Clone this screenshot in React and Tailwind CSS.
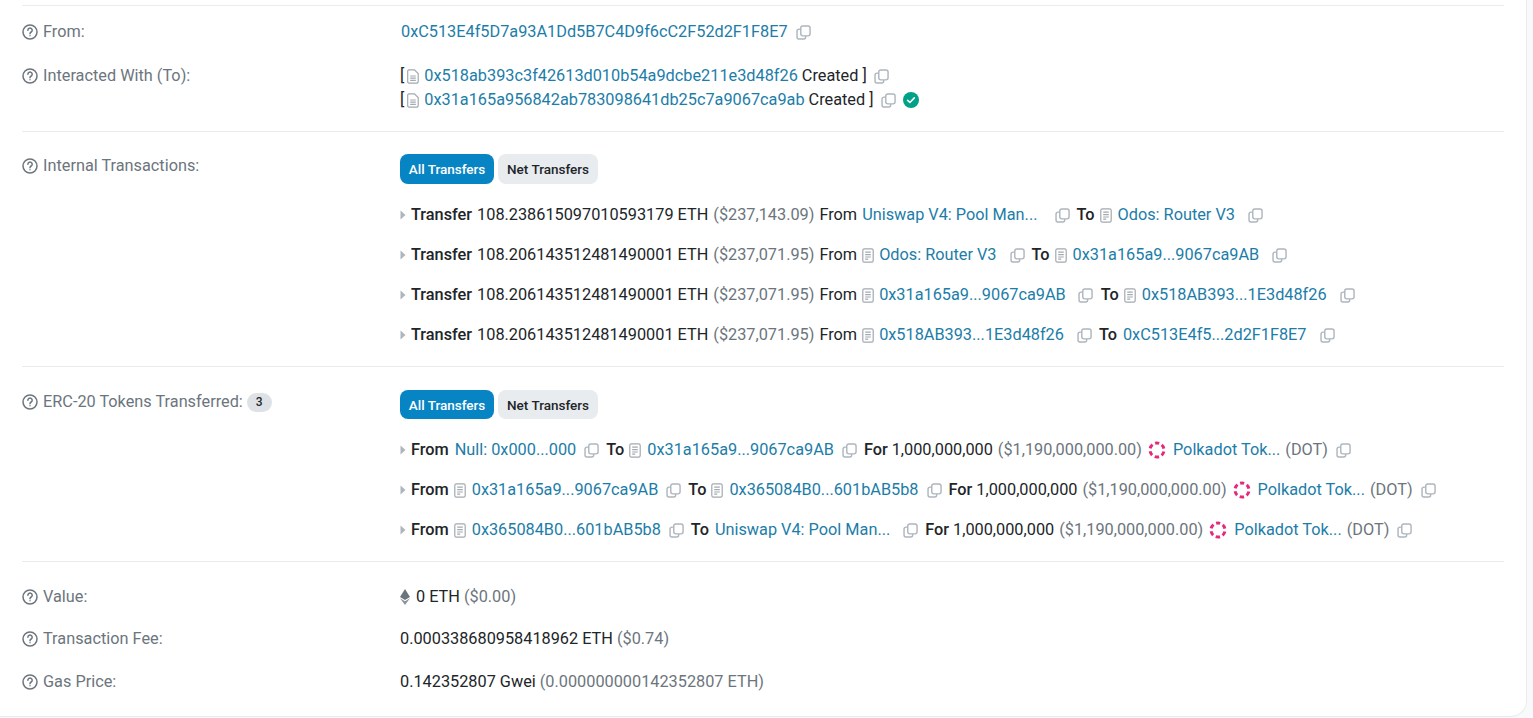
import React from "react";

const CopyIcon = ({ className = "" }) => (
  <svg viewBox="0 0 16 16" className={`w-[15px] h-[15px] shrink-0 text-[#adb5bd] ${className}`} fill="none" stroke="currentColor" strokeWidth="1.5">
    <rect x="5.1" y="1" width="9.9" height="10.6" rx="2.2" />
    <path d="M5.1 4.4H3.1a2 2 0 0 0-2 2v6.5a2 2 0 0 0 2 2h5.2a2 2 0 0 0 2-2v-1.3" />
  </svg>
);

// contract icon with folded corner (top rows)
const FileIcon = ({ className = "" }) => (
  <svg viewBox="0 0 12 15" className={`w-[12px] h-[15px] shrink-0 text-[#a3a9b0] ${className}`} fill="none" stroke="currentColor" strokeWidth="1.2">
    <path d="M2 .8h5.4l3.8 3.8V12.6a1.6 1.6 0 0 1-1.6 1.6H2A1.4 1.4 0 0 1 .7 12.7V2.2A1.4 1.4 0 0 1 2 .8z" />
    <path d="M3.2 7h5.6M3.2 9.2h5.6M3.2 11.4h5.6" />
  </svg>
);

// contract icon in the transfer rows, square corners
const NoteIcon = ({ className = "" }) => (
  <svg viewBox="0 0 12 15" className={`w-[12px] h-[15px] shrink-0 text-[#a3a9b0] ${className}`} fill="none" stroke="currentColor" strokeWidth="1.2">
    <rect x=".8" y=".8" width="10.4" height="13.4" rx="1.6" />
    <path d="M3.2 4.2h5.6M3.2 6.6h5.6M3.2 9h5.6M3.2 11.2h3" />
  </svg>
);

const HelpIcon = () => (
  <svg viewBox="0 0 16 16" className="w-4 h-4 shrink-0 text-[#6c757d]" fill="none" stroke="currentColor" strokeWidth="1.5">
    <circle cx="8" cy="8" r="7" />
    <path d="M5.9 6.2a2.15 2.15 0 1 1 3.3 1.8c-.8.5-1.2.9-1.2 1.7" strokeLinecap="round" />
    <circle cx="8" cy="11.8" r=".7" fill="currentColor" stroke="none" />
  </svg>
);

const Caret = () => (
  <svg viewBox="0 0 6 10" className="w-[6px] h-[10px] shrink-0 mr-[5px] text-[#adb5bd]" fill="currentColor">
    <path d="M0.5 0.5L5.5 5L0.5 9.5z" />
  </svg>
);

const DotLogo = () => (
  <svg viewBox="0 0 18 18" className="w-[18px] h-[18px] shrink-0" fill="none" stroke="#e6297a" strokeWidth="3">
    <circle cx="9" cy="9" r="7" strokeDasharray="4.4 2.93" strokeDashoffset="2.2" transform="rotate(-90 9 9)" />
  </svg>
);

const EthIcon = () => (
  <svg viewBox="0 0 10 16" className="w-[10px] h-[16px] shrink-0 mr-[6px]">
    <path d="M5 0L0 8.1l5 3 5-3z" fill="#6c757d" />
    <path d="M5 12.2L0 9.2 5 16l5-6.8z" fill="#8c939a" />
  </svg>
);

const Lnk = ({ children, className = "" }) => (
  <span className={`text-[#1c7da8] whitespace-nowrap ${className}`}>{children}</span>
);

const Muted = ({ children, className = "" }) => (
  <span className={`text-[#6c757d] whitespace-nowrap ${className}`}>{children}</span>
);

const Bold = ({ children, className = "" }) => (
  <span className={`font-medium text-[#212529] whitespace-nowrap ${className}`}>{children}</span>
);

const Label = ({ children, badge, className = "" }) => (
  <div className={`w-[378px] shrink-0 flex items-center gap-[5px] text-[#6c757d] h-[22px] ${className}`}>
    <HelpIcon />
    <span>{children}</span>
    {badge && (
      <span className="-ml-px bg-[#dee2e6] text-[#212529] text-[12px] font-medium rounded-full px-[9px] h-[19px] flex items-center">
        {badge}
      </span>
    )}
  </div>
);

const Tabs = ({ className = "" }) => (
  <div className={`flex gap-[4px] text-[13.5px] font-medium ${className}`}>
    <span className="bg-[#0784c3] text-white rounded-lg w-[94px] flex items-center justify-center">All Transfers</span>
    <span className="bg-[#e9ecef] text-[#212529] rounded-lg w-[100px] flex items-center justify-center">Net Transfers</span>
  </div>
);

const Row = ({ children }) => (
  <div className="flex items-center h-[20px] whitespace-nowrap">
    <Caret />
    {children}
  </div>
);

const Transfer = ({ amount, usd, from, fromFile, fromW, to, toFile, toW }) => (
  <Row>
    <Bold>Transfer</Bold>
    <span className="ml-[5px]">{amount} ETH</span>
    <Muted className="ml-[5px]">{usd}</Muted>
    <span className="ml-[5px]">From</span>
    {fromFile && <NoteIcon className="ml-[5px]" />}
    <Lnk className="ml-[5px]">{from}</Lnk>
    <CopyIcon className={fromW} />
    <Bold className="ml-[7px]">To</Bold>
    {toFile && <NoteIcon className="ml-[5px]" />}
    <Lnk className="ml-[6px]">{to}</Lnk>
    <CopyIcon className={toW} />
  </Row>
);

const Token = ({ from, fromFile, fromGap, to, toFile, toGap }) => (
  <Row>
    <Bold>From</Bold>
    {fromFile && <NoteIcon className="ml-[5px]" />}
    <Lnk className="ml-[6px]">{from}</Lnk>
    <CopyIcon className={fromGap} />
    <Bold className="ml-[7px]">To</Bold>
    {toFile && <NoteIcon className="ml-[5px]" />}
    <Lnk className="ml-[6px]">{to}</Lnk>
    <CopyIcon className={toGap} />
    <Bold className="ml-[7px]">For</Bold>
    <span className="ml-[4px]">1,000,000,000</span>
    <Muted className="ml-[5px]">($1,190,000,000.00)</Muted>
    <span className="ml-[6px]"><DotLogo /></span>
    <Lnk className="ml-[7px]">Polkadot Tok...</Lnk>
    <Muted className="ml-[5px]">(DOT)</Muted>
    <CopyIcon className="ml-[8px]" />
  </Row>
);

const Hr = () => <div className="h-px bg-[#e9ecef]" />;

export default function App() {
  return (
    <div className="h-[718px] overflow-hidden bg-[#f8f9fa]">
      <div
        className="w-[1527px] h-[717px] bg-white rounded-br-2xl border-r border-b border-[#e9ecef] pl-[22px] pr-[22px] text-[#212529] text-[16.3px] leading-[22px]"
        style={{ fontFamily: "Roboto, sans-serif" }}
      >
        <div className="pt-[5px]"><Hr /></div>

        <div className="flex pt-[15px]">
          <Label>From:</Label>
          <div className="flex items-center h-[22px]">
            <Lnk className="ml-[1px]">0xC513E4f5D7a93A1Dd5B7C4D9f6cC2F52d2F1F8E7</Lnk>
            <CopyIcon className="ml-[8px]" />
          </div>
        </div>

        <div className="flex pt-[22px]">
          <Label>Interacted With (To):</Label>
          <div className="flex flex-col gap-[2px]">
            <div className="flex items-center h-[22px]">
              <span>[</span>
              <FileIcon className="ml-[3px]" />
              <Lnk className="ml-[5px]">0x518ab393c3f42613d010b54a9dcbe211e3d48f26</Lnk>
              <span className="ml-[4px]">Created ]</span>
              <CopyIcon className="ml-[7px]" />
            </div>
            <div className="flex items-center h-[22px]">
              <span>[</span>
              <FileIcon className="ml-[3px]" />
              <Lnk className="ml-[5px]">0x31a165a956842ab783098641db25c7a9067ca9ab</Lnk>
              <span className="ml-[4px]">Created ]</span>
              <CopyIcon className="ml-[7px]" />
              <svg viewBox="0 0 16 16" className="w-4 h-4 ml-[7px]">
                <circle cx="8" cy="8" r="8" fill="#00a186" />
                <path d="M4.6 8.3l2.3 2.2 4.4-4.6" fill="none" stroke="#fff" strokeWidth="1.6" strokeLinecap="round" strokeLinejoin="round" />
              </svg>
            </div>
          </div>
        </div>

        <div className="pt-[20px]"><Hr /></div>

        <div className="flex pt-[22px]">
          <Label className="mt-[1px]">Internal Transactions:</Label>
          <div>
            <Tabs className="h-[30px]" />
            <div className="flex flex-col gap-[20px] pt-[21px]">
              <Transfer amount="108.238615097010593179" usd="($237,143.09)" from="Uniswap V4: Pool Man..." fromW="ml-[18px] -mr-px" to="Odos: Router V3" toFile toW="ml-[13px]" />
              <Transfer amount="108.206143512481490001" usd="($237,071.95)" from="Odos: Router V3" fromFile fromW="ml-[13px]" to="0x31a165a9...9067ca9AB" toFile toW="ml-[13px]" />
              <Transfer amount="108.206143512481490001" usd="($237,071.95)" from="0x31a165a9...9067ca9AB" fromFile fromW="ml-[12px] mr-px" to="0x518AB393...1E3d48f26" toFile toW="ml-[13px]" />
              <Transfer amount="108.206143512481490001" usd="($237,071.95)" from="0x518AB393...1E3d48f26" fromFile fromW="ml-[13px]" to="0xC513E4f5...2d2F1F8E7" toW="ml-[13px]" />
            </div>
          </div>
        </div>

        <div className="pt-[21px]"><Hr /></div>

        <div className="flex pt-[23px]">
          <Label className="mt-[1px]" badge="3">ERC-20 Tokens Transferred:</Label>
          <div>
            <Tabs className="h-[29px]" />
            <div className="flex flex-col gap-[20px] pt-[21px]">
              <Token from="Null: 0x000...000" fromGap="ml-[8px]" to="0x31a165a9...9067ca9AB" toFile toGap="ml-[8px]" />
              <Token from="0x31a165a9...9067ca9AB" fromFile fromGap="ml-[8px]" to="0x365084B0...601bAB5b8" toFile toGap="ml-[8px]" />
              <Token from="0x365084B0...601bAB5b8" fromFile fromGap="ml-[8px]" to="Uniswap V4: Pool Man..." toGap="ml-[13px]" />
            </div>
          </div>
        </div>

        <div className="pt-[21px]"><Hr /></div>

        <div className="flex pt-[24px]">
          <Label>Value:</Label>
          <div className="flex items-center h-[22px]">
            <EthIcon />
            <span>0 ETH</span>
            <Muted className="ml-[4px]">($0.00)</Muted>
          </div>
        </div>

        <div className="flex pt-[20px]">
          <Label>Transaction Fee:</Label>
          <div className="flex items-center h-[22px]">
            <span>0.000338680958418962 ETH</span>
            <Muted className="ml-[4px]">($0.74)</Muted>
          </div>
        </div>

        <div className="flex pt-[21px]">
          <Label>Gas Price:</Label>
          <div className="flex items-center h-[22px]">
            <span>0.142352807 Gwei</span>
            <Muted className="ml-[4px]">(0.000000000142352807 ETH)</Muted>
          </div>
        </div>
      </div>
    </div>
  );
}
